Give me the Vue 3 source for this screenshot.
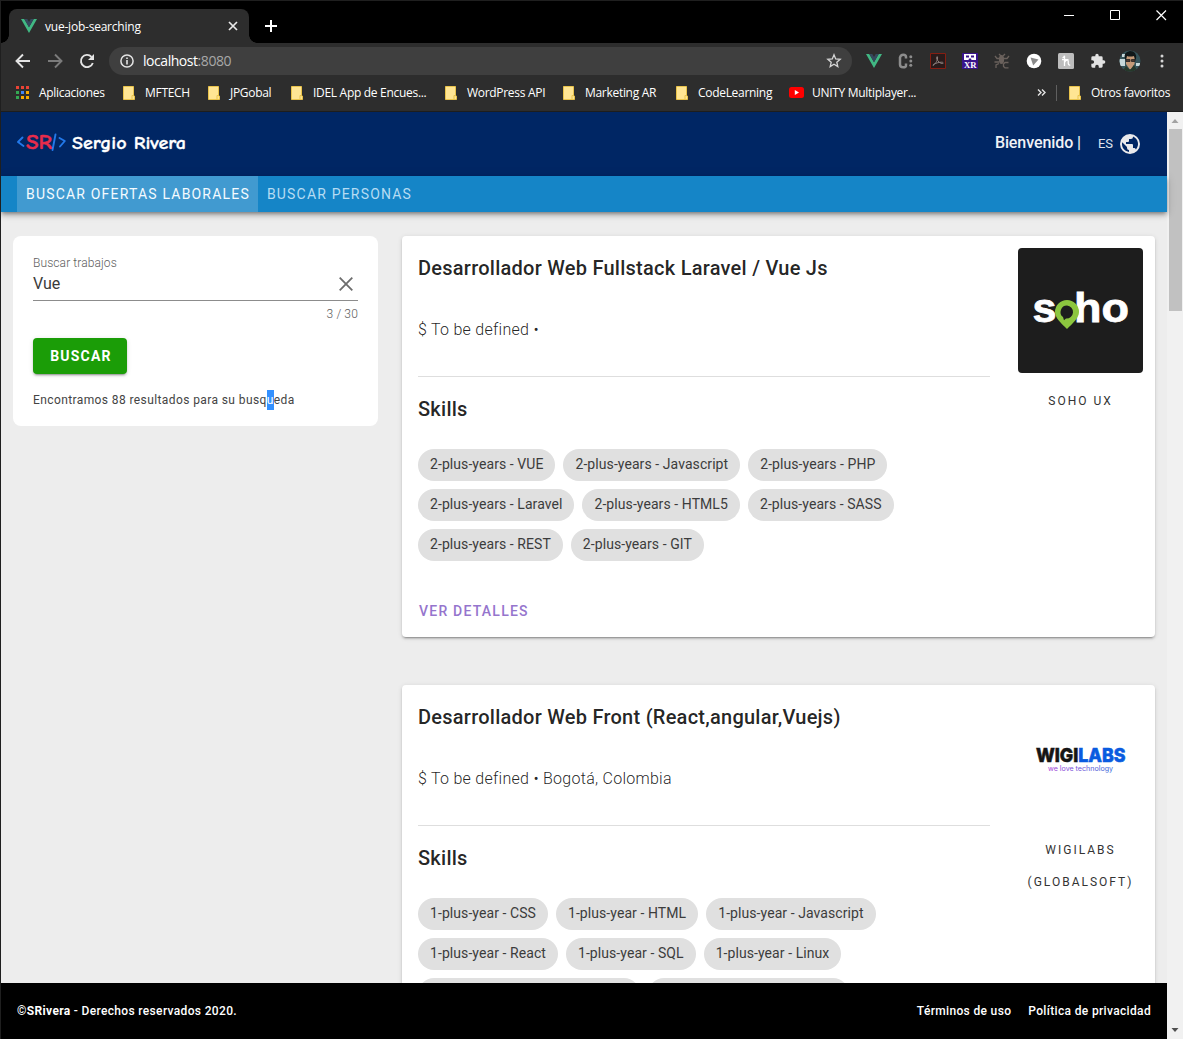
<script setup>
const bookmarks = [
  { label: 'Aplicaciones', kind: 'apps', width: 107 },
  { label: 'MFTECH', kind: 'folder', width: 85 },
  { label: 'JPGobal', kind: 'folder', width: 83 },
  { label: 'IDEL App de Encues...', kind: 'folder', width: 154 },
  { label: 'WordPress API', kind: 'folder', width: 118 },
  { label: 'Marketing AR', kind: 'folder', width: 113 },
  { label: 'CodeLearning', kind: 'folder', width: 114 },
  { label: 'UNITY Multiplayer...', kind: 'video', width: 149 },
]
const appColors = ['#ea4335', '#ea4335', '#ea4335', '#34a853', '#4285f4', '#fbab00', '#34a853', '#fbab00', '#fbab00']

const jobs = [
  {
    title: 'Desarrollador Web Fullstack Laravel / Vue Js',
    meta: '$ To be defined •',
    logo: 'soho',
    company: ['SOHO UX'],
    rows: [
      ['2-plus-years - VUE', '2-plus-years - Javascript', '2-plus-years - PHP'],
      ['2-plus-years - Laravel', '2-plus-years - HTML5', '2-plus-years - SASS'],
      ['2-plus-years - REST', '2-plus-years - GIT'],
    ],
  },
  {
    title: 'Desarrollador Web Front (React,angular,Vuejs)',
    meta: '$ To be defined • Bogotá, Colombia',
    logo: 'wigilabs',
    company: ['WIGILABS', '(GLOBALSOFT)'],
    rows: [
      ['1-plus-year - CSS', '1-plus-year - HTML', '1-plus-year - Javascript'],
      ['1-plus-year - React', '1-plus-year - SQL', '1-plus-year - Linux'],
      ['1-plus-year - Responsive design', '1-plus-year - Bases de datos'],
    ],
  },
]
</script>

<template>
  <div class="window">
    <div class="tabstrip">
      <div class="tab">
        <svg class="fav" width="16" height="14" viewBox="0 0 16 14"><path fill="#41b883" d="M0 0h3.300L8 8.200 12.700 0H16L8 14z" /><path fill="#35495e" d="M3.300 0h3L8 3l1.700-3h3L8 8.200z" /></svg>
        <span class="tab-title">vue-job-searching</span>
        <svg class="tab-close" width="10" height="10" viewBox="0 0 10 10"><path d="M1 1l8 8M9 1l-8 8" stroke="#e8e8e8" stroke-width="1.700" /></svg>
      </div>
      <svg class="plus" width="12" height="12" viewBox="0 0 12 12"><path d="M6 0v12M0 6h12" stroke="#fff" stroke-width="2" /></svg>
      <div class="controls">
        <svg width="11" height="11" viewBox="0 0 11 11"><path d="M0 5.500h10" stroke="#fff" /></svg>
        <svg width="11" height="11" viewBox="0 0 11 11"><path d="M.5.5h9v9h-9z" fill="none" stroke="#fff" /></svg>
        <svg width="11" height="11" viewBox="0 0 11 11"><path d="M.5.5l9.500 9.500M10 .5L.5 10" stroke="#fff" stroke-width="1.200" /></svg>
      </div>
    </div>

    <div class="toolbar">
      <div class="nav-icons">
        <svg width="16" height="16" viewBox="0 0 16 16"><path d="M15 8H2M8 1.500L1.500 8 8 14.500" fill="none" stroke="#e4e4e4" stroke-width="1.900" /></svg>
        <svg width="16" height="16" viewBox="0 0 16 16"><path d="M1 8h13M8 1.500L14.500 8 8 14.500" fill="none" stroke="#7b7b7b" stroke-width="1.900" /></svg>
        <svg width="16" height="16" viewBox="0 0 16 16"><path d="M13.800 10A6.100 6.100 0 1 1 12.500 3.800" fill="none" stroke="#e4e4e4" stroke-width="1.900" /><path d="M15 1v6H9z" fill="#e4e4e4" /></svg>
      </div>
      <div class="address">
        <svg width="14" height="14" viewBox="0 0 14 14"><circle cx="7" cy="7" r="6.100" fill="none" stroke="#e4e4e4" stroke-width="1.500" /><path d="M7 6v4.500M7 3.500v1.600" stroke="#e4e4e4" stroke-width="1.600" /></svg>
        <span class="url">localhost<i>:8080</i></span>
        <svg class="star" width="16" height="16" viewBox="0 0 16 16"><path d="M8 1.800l1.700 4.100 4.500.4-3.400 2.900 1 4.400L8 11.300l-3.800 2.300 1-4.400-3.400-2.900 4.500-.4z" fill="none" stroke="#d5d5d5" stroke-width="1.300" /></svg>
      </div>
      <div class="extensions">
        <svg width="16" height="16" viewBox="0 0 16 16"><path fill="#41b883" d="M0 1h3.300L8 9.200 12.700 1H16L8 15z" /><path fill="#35495e" d="M3.300 1h3L8 4l1.700-3h3L8 9.200z" /></svg>
        <svg width="16" height="16" viewBox="0 0 16 16"><path d="M8 5.500V4Q8 1.700 5.300 1.700T2 4.500v7q0 2.800 3.200 2.800T8 12v-1.500" fill="none" stroke="#8d8d8d" stroke-width="2.500" /><g fill="#8d8d8d"><circle cx="12.800" cy="3.800" r="1.500" /><circle cx="12.800" cy="8" r="1.500" /><circle cx="12.800" cy="12.200" r="1.500" /></g></svg>
        <svg width="16" height="16" viewBox="0 0 16 16"><path d="M.5.5h15v15H.5z" fill="#291b1b" stroke="#851e12" /><path d="M3 12.500c3-2 5-6 4.500-8.500-.3-1-1.300 0-.6 2 1 2.500 3 4.500 5.600 4.500 1.300 0 1-1.400-1-1.300-2.500 0-6 1-8 2.200z" fill="none" stroke="#8b807d" /></svg>
        <svg width="16" height="16" viewBox="0 0 16 16"><path fill="#38148a" d="M0 0h16v16H0z" /><path fill="#fff" d="M2 1h12v6h-4.500L9 5.500H7L6.500 7H2z" /><path fill="#38148a" d="M4 2.500h3v2H4zM9 2.500h3v2H9z" /><text x="2" y="14.800" font-family="Liberation Serif, serif" font-size="9" font-weight="700" fill="#fff" textLength="12.500" lengthAdjust="spacingAndGlyphs">XR</text></svg>
        <svg width="16" height="16" viewBox="0 0 16 16"><g fill="none" stroke="#6a615c" stroke-width="1.300"><path d="M5 1l2 2M11 1L9 3M1 3l2 2.500h3M15 3l-2 2.500h-3M.5 9H5M2 15v-3l3-1.500" /><path d="M14.500 9.500H11L9.500 11v2.500l1.500 1.300h3.500" /></g><ellipse cx="7.500" cy="6.500" rx="2.600" ry="4.500" fill="#6a615c" /></svg>
        <svg width="16" height="16" viewBox="0 0 16 16"><circle cx="8" cy="8" r="7.300" fill="#fff" /><path d="M4.500 4.500l8 2-5.300 6z" fill="#8a8a8a" /></svg>
        <svg width="16" height="16" viewBox="0 0 16 16"><rect width="16" height="16" rx="1.500" fill="#bdbdbd" /><path d="M4.500 5Q6 4.500 6.500 2.800V13M6.500 9.500Q7.500 7 9.200 7q1.300 0 1 2.500 0 3 2 2.500M4 6.700h6.500" fill="none" stroke="#fff" stroke-width="1.300" /></svg>
        <svg width="16" height="16" viewBox="0 0 24 24"><path fill="#e2e2e2" d="M20.500 11H19V7a2 2 0 0 0-2-2h-4V3.500a2.500 2.500 0 0 0-5 0V5H4a2 2 0 0 0-2 2v3.800h1.500a2.700 2.700 0 0 1 0 5.400H2V20a2 2 0 0 0 2 2h3.800v-1.500a2.700 2.700 0 0 1 5.400 0V22H17a2 2 0 0 0 2-2v-4h1.500a2.500 2.500 0 0 0 0-5z" /></svg>
        <svg class="avatar" width="22" height="22" viewBox="0 0 22 22"><defs><clipPath id="face"><circle cx="11" cy="11" r="10.500" /></clipPath></defs><g clip-path="url(#face)"><path fill="#35545a" d="M0 0h22v22H0z" /><path fill="#c5d8da" d="M0 9h6v7H0zM3 4h3v3H3zM17 13h4v3h-4z" /><path fill="#c39a78" d="M7 6q5-3 9 1l-.5 7-3 5h-2L7 14z" /><path fill="#101819" d="M6 9Q4 2 11 1q7 0 6 8l-1 1-1-4q-4 1-7 0l-1 4z" /><path d="M7 9.500h4v2H7zM12.500 9.500H16v2h-3.500z" fill="#4b3a30" stroke="#222" stroke-width=".8" /><path fill="#26382a" d="M3 22l4-6 4 4 4-5 4 7z" /></g></svg>
        <svg class="kebab" width="4" height="16" viewBox="0 0 4 16"><g fill="#d5d5d5"><circle cx="2" cy="3" r="1.500" /><circle cx="2" cy="8" r="1.500" /><circle cx="2" cy="13" r="1.500" /></g></svg>
      </div>
    </div>

    <div class="bookmarks">
      <div v-for="b in bookmarks" :key="b.label" class="bookmark" :style="{ width: b.width + 'px' }">
        <span v-if="b.kind === 'apps'" class="apps"><i v-for="(c, n) in appColors" :key="n" :style="{ background: c }"></i></span>
        <svg v-else-if="b.kind === 'folder'" width="15" height="14" viewBox="0 0 15 14"><path fill="#ffe593" stroke="#e9c34b" d="M1.500.5h10v9.500h1v3.500h-11z" /><path d="M10 13v-3.500h2" fill="none" stroke="#e9c34b" /></svg>
        <svg v-else class="video" width="15" height="11" viewBox="0 0 15 11"><rect width="15" height="11" rx="2.500" fill="#f00" /><path fill="#fff" d="M5.800 3v5L10 5.500z" /></svg>
        <span>{{ b.label }}</span>
      </div>
      <svg class="more" width="9" height="7" viewBox="0 0 9 7"><path d="M1 .5l3 3-3 3M5 .5l3 3-3 3" fill="none" stroke="#e4e4e4" stroke-width="1.400" /></svg>
      <span class="divider"></span>
      <div class="bookmark other">
        <svg width="15" height="14" viewBox="0 0 15 14"><path fill="#ffe593" stroke="#e9c34b" d="M1.500.5h10v9.500h1v3.500h-11z" /><path d="M10 13v-3.500h2" fill="none" stroke="#e9c34b" /></svg>
        <span>Otros favoritos</span>
      </div>
    </div>

    <div class="viewport">
      <div class="page">
        <header>
          <svg class="brand" width="172" height="32" viewBox="0 0 172 32">
            <g fill="none" stroke="#2279ea" stroke-width="1.900" stroke-linecap="round" stroke-linejoin="round"><path d="M6.500 9.500L2 14l5.500 4M39.500 6.500L36.500 22M43.500 10l5.300 3-4.800 5.500" /></g>
            <text x="10" y="21" font-family="'Comic Neue', 'Comic Sans MS', Lato, cursive" font-weight="700" font-size="20" fill="#e82c4b" stroke="#e82c4b" stroke-width=".4" textLength="26" lengthAdjust="spacingAndGlyphs">SR</text>
            <text x="56" y="20.500" font-family="'Comic Neue', 'Comic Sans MS', Lato, cursive" font-weight="700" font-size="18" fill="#fff" stroke="#fff" stroke-width=".3" textLength="114" lengthAdjust="spacingAndGlyphs">Sergio Rivera</text>
          </svg>
          <div class="session">
            <span class="welcome">Bienvenido |</span>
            <span class="lang">ES</span>
            <svg width="24" height="24" viewBox="0 0 24 24"><path fill="#e9e9ec" d="M17.900 17.390c-.26-.8-1.010-1.390-1.900-1.390h-1v-3a1 1 0 0 0-1-1H8v-2h2a1 1 0 0 0 1-1V7h2a2 2 0 0 0 2-2v-.41a7.984 7.984 0 0 1 2.900 12.800M11 19.930c-3.950-.49-7-3.850-7-7.930 0-.62.080-1.220.21-1.790L9 15v1a2 2 0 0 0 2 2m1-16A10 10 0 0 0 2 12a10 10 0 0 0 10 10 10 10 0 0 0 10-10A10 10 0 0 0 12 2z" /></svg>
          </div>
        </header>
        <nav>
          <a class="active">BUSCAR OFERTAS LABORALES</a>
          <a>BUSCAR PERSONAS</a>
        </nav>

        <main>
          <section class="search">
            <label>Buscar trabajos</label>
            <div class="field">
              <span>Vue</span>
              <svg width="14" height="14" viewBox="0 0 14 14"><path d="M.7.7l12.600 12.600M13.300.7L.7 13.300" stroke="#6c6c6c" stroke-width="1.800" /></svg>
            </div>
            <div class="counter">3 / 30</div>
            <button>BUSCAR</button>
            <p>Encontramos 88 resultados para su busq<mark>u</mark>eda</p>
          </section>

          <div class="results">
            <article v-for="job in jobs" :key="job.title">
              <div class="detail">
                <h2>{{ job.title }}</h2>
                <div class="meta">{{ job.meta }}</div>
                <hr />
                <h3>Skills</h3>
                <div class="chips">
                  <div v-for="(row, r) in job.rows" :key="r" class="chip-row">
                    <span v-for="chip in row" :key="chip" class="chip">{{ chip }}</span>
                  </div>
                </div>
                <a class="more-link">VER DETALLES</a>
              </div>
              <div class="company">
                <svg v-if="job.logo === 'soho'" class="logo" width="125" height="125" viewBox="0 0 125 125">
                  <rect width="125" height="125" rx="4" fill="#1d1d1d" />
                  <g font-family="'Liberation Sans', Arial, sans-serif" font-weight="700" fill="#fff" stroke="#fff" stroke-width=".8">
                    <text x="14.500" y="74" font-size="41" textLength="24" lengthAdjust="spacingAndGlyphs">s</text>
                    <text x="56" y="74" font-size="41" textLength="55" lengthAdjust="spacingAndGlyphs">ho</text>
                  </g>
                  <path fill="#8cc63f" fill-rule="evenodd" d="M49 52a12 12 0 0 1 12 12c0 6-6 11-12 17-6-6-12-11-12-17a12 12 0 0 1 12-12zm0 5.500a6.500 6.500 0 0 0-4 11.600l1 3.200 2-1.800a6.500 6.500 0 1 0 1-13z" />
                </svg>
                <svg v-else class="logo" width="125" height="125" viewBox="0 0 125 125">
                  <defs><linearGradient id="tagline"><stop stop-color="#a443d6" /><stop offset="1" stop-color="#3565d8" /></linearGradient></defs>
                  <text x="18" y="64.500" font-family="Inter, sans-serif" font-weight="800" font-size="19" textLength="89.500" lengthAdjust="spacingAndGlyphs" fill="#151515" stroke="#151515" stroke-width=".6">WIGI<tspan fill="#095be0" stroke="#095be0">LABS</tspan></text>
                  <text x="30" y="74" font-family="Inter, sans-serif" font-size="7" fill="url(#tagline)" textLength="65" lengthAdjust="spacingAndGlyphs">we love technology</text>
                </svg>
                <div v-for="line in job.company" :key="line" class="company-name">{{ line }}</div>
              </div>
            </article>
          </div>
        </main>

        <footer>
          <span class="rights"><b>©SRivera</b> - Derechos reservados 2020.</span>
          <span class="legal"><a>Términos de uso</a><a>Política de privacidad</a></span>
        </footer>
      </div>
      <div class="scrollbar">
        <svg width="16" height="17" viewBox="0 0 16 17"><path fill="#a3a3a3" d="M4.500 11L8 7l3.500 4z" /></svg>
        <div class="thumb"></div>
        <svg width="16" height="17" viewBox="0 0 16 17"><path fill="#505050" d="M4.500 6L8 10l3.500-4z" /></svg>
      </div>
    </div>
  </div>
</template>

<style>
body { background: #000; overflow: hidden; }
</style>

<style scoped>
* { box-sizing: border-box; }
svg { display: block; flex: none; }
.window { width: 1183px; height: 1039px; border: solid #1f1f1f; border-width: 1px 0 0 1px; display: flex; flex-direction: column; overflow: hidden; background: #2d2d2d; font-family: 'Open Sans', 'Noto Sans', sans-serif; color: #fff; }

.tabstrip { height: 42px; flex: none; background: #000; display: flex; }
.tab { width: 240px; height: 34px; margin: 8px 0 0 8px; border-radius: 8px 8px 0 0; background: #2d2d2d; display: flex; align-items: center; padding: 0 11px 0 12px; position: relative; }
.tab::before, .tab::after { content: ''; position: absolute; bottom: 0; width: 8px; height: 8px; }
.tab::before { left: -8px; background: radial-gradient(circle at 0 0, #000 7.500px, #2d2d2d 8px); }
.tab::after { right: -8px; background: radial-gradient(circle at 100% 0, #000 7.500px, #2d2d2d 8px); }
.tab-title { margin-left: 8px; font-size: 12px; letter-spacing: -.22px; }
.tab-close { margin-left: auto; }
.plus { margin: 19px 0 0 16px; }
.controls { display: flex; gap: 35px; margin: 9px 16px 0 auto; }

.toolbar { height: 36px; flex: none; display: flex; align-items: center; }
.nav-icons { display: flex; gap: 16px; margin-left: 14px; }
.address { width: 743px; height: 28px; margin-left: 14px; border-radius: 14px; background: #3f3f3f; display: flex; align-items: center; padding: 0 10px 0 11px; }
.url { margin-left: 9px; font-size: 14px; line-height: 20px; letter-spacing: -.45px; margin-top: -1px; }
.url i { font-style: normal; color: #a8a8a8; }
.star { margin-left: auto; }
.extensions { display: flex; align-items: center; gap: 16px; margin-left: 14px; }
.avatar { margin: 0 -2px 0 -3px; }
.kebab { margin-left: 5px; }

.bookmarks { height: 33px; flex: none; padding: 0 0 5px 14px; display: flex; align-items: center; border-bottom: 1px solid #1d1d1d; font-size: 12px; letter-spacing: -.3px; white-space: nowrap; }
.bookmark { flex: none; display: flex; align-items: center; gap: 8px; }
.apps { width: 14px; height: 14px; display: grid; grid-template-columns: repeat(3, 3px); grid-auto-rows: 3px; gap: 2px; margin: 0 1px; }
.more { margin-left: 99px; }
.divider { width: 1px; height: 16px; margin: 0 11px 0 10px; background: #606060; }

.viewport { flex: 1; min-height: 0; display: flex; font-family: Roboto, sans-serif; }
.page { width: 1166px; height: 100%; display: flex; flex-direction: column; background: #ededed; color: rgba(0, 0, 0, .87); }
header { height: 64px; flex: none; background: #002664; display: flex; align-items: center; padding: 0 25px 0 15px; }
.session { margin-left: auto; display: flex; align-items: center; color: #fff; }
.welcome { font-size: 16px; font-weight: 500; line-height: 20px; margin-top: -2px; letter-spacing: -.09px; color: #f0f2f6; }
.lang { margin: -1px 5px 0 17px; font-size: 13px; color: #dfe3ec; }
nav { height: 36px; flex: none; background: #1585c7; display: flex; padding-left: 16px; box-shadow: 0 2px 4px -1px rgba(0, 0, 0, .4), 0 4px 5px rgba(0, 0, 0, .14), 0 1px 10px rgba(0, 0, 0, .12); position: relative; }
nav a { padding: 0 8px 0 9px; line-height: 36px; font-size: 14px; letter-spacing: 1.190px; color: #b5dcf3; }
nav a.active { background: #419ad0; color: #f4fbff; }

main { flex: 1; min-height: 0; overflow: hidden; display: flex; align-items: flex-start; padding: 24px 12px 0; gap: 24px; }
.search { width: 365px; height: 190px; border-radius: 8px; background: #fff; padding: 18px 20px 0; }
label { display: block; font-size: 12px; line-height: 18px; color: #5c5c5c; font-weight: 300; letter-spacing: .1px; }
.field { height: 29px; border-bottom: 1px solid #8c8c8c; display: flex; justify-content: space-between; font-size: 16px; line-height: 23px; padding-right: 5px; color: #3a3a3a; }
.field svg { margin-top: 5px; }
.counter { text-align: right; font-size: 12px; line-height: 26px; color: #5c5c5c; font-weight: 300; letter-spacing: .15px; }
button { display: block; width: 94px; height: 36px; margin: 11px 0 0; padding: 0 0 0 2px; border: 0; border-radius: 4px; background: #1b9d07; color: #fff; font: 700 14px Roboto, sans-serif; letter-spacing: 1.200px; box-shadow: 0 3px 1px -2px rgba(0, 0, 0, .2), 0 2px 2px rgba(0, 0, 0, .14), 0 1px 5px rgba(0, 0, 0, .12); }
p { margin: 16px 0 0; font-size: 12px; line-height: 20px; letter-spacing: .4px; color: #444; }
mark { display: inline-block; background: #3390ff; color: #fff; }

.results { width: 753px; display: flex; flex-direction: column; gap: 48px; }
article { height: 401px; flex: none; border-radius: 4px; background: #fff; display: flex; box-shadow: 0 3px 1px -2px rgba(0, 0, 0, .2), 0 2px 2px rgba(0, 0, 0, .14), 0 1px 5px rgba(0, 0, 0, .12); }
.detail { width: 604px; padding: 16px; }
h2, h3 { margin: 0; font-size: 20px; font-weight: 500; line-height: 32px; letter-spacing: .25px; }
.meta { margin-top: 34px; font-size: 16px; line-height: 24px; font-weight: 300; letter-spacing: .27px; }
hr { width: 572px; margin: 34px 0 16px; border: 0; height: 1px; background: #dedede; }
.chips { display: flex; flex-direction: column; gap: 8px; margin-top: 24px; }
.chip-row { display: flex; gap: 8px; }
.chip { height: 32px; padding: 0 12px; border-radius: 16px; background: #e0e0e0; font-size: 14px; line-height: 31px; letter-spacing: .075px; color: #3c3c3c; white-space: nowrap; }
.more-link { display: block; margin: 40px 0 0 1px; font-size: 14px; font-weight: 500; line-height: 20px; letter-spacing: 1.220px; color: #9575cd; }
.company { width: 149px; padding: 12px; display: flex; flex-direction: column; align-items: center; }
.logo { margin-bottom: 12px; }
.company-name { font-size: 12px; line-height: 32px; letter-spacing: 2px; white-space: nowrap; color: #333; }

footer { height: 56px; flex: none; background: #000; color: #fff; padding: 0 16px; display: flex; align-items: center; justify-content: space-between; font-size: 12px; font-weight: 500; letter-spacing: .34px; position: relative; }
footer b { font-weight: 700; }
.legal { display: flex; gap: 17px; }
.scrollbar { width: 16px; height: 100%; background: #f1f1f1; display: flex; flex-direction: column; align-items: center; }
.thumb { width: 13px; height: 182px; margin-bottom: auto; background: #c1c1c1; }
</style>
